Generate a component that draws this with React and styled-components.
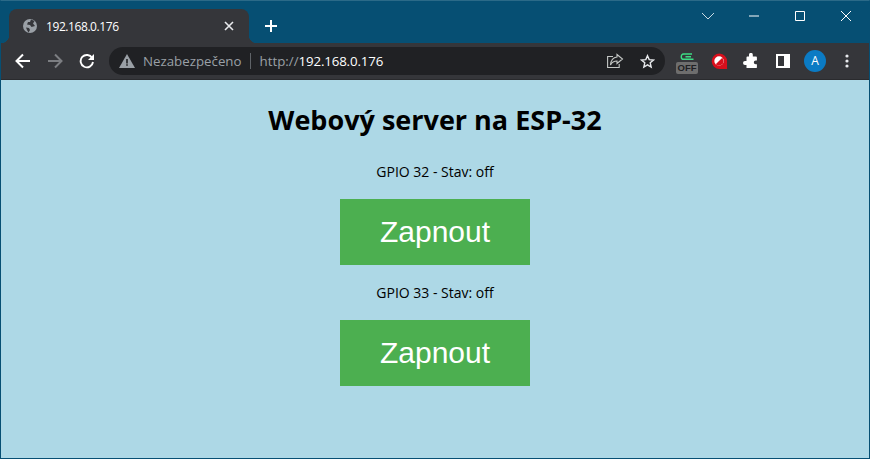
import styled, { createGlobalStyle } from "styled-components";

const GlobalStyle = createGlobalStyle`
  html, body {
    margin: 0;
    padding: 0;
    height: 100%;
    overflow: hidden;
    background: #064f73;
  }
`;

const Win = styled.div`
  display: flex;
  flex-direction: column;
  width: 870px;
  height: 459px;
  box-sizing: border-box;
  border: 1px solid #064f73;
  border-top: 1px solid #2b6a88;
`;

const TitleBar = styled.div`
  display: flex;
  align-items: flex-end;
  height: 42px;
  flex: none;
  background: #064f73;
  padding-left: 8px;
`;

const Tab = styled.div`
  position: relative;
  display: flex;
  align-items: center;
  width: 240px;
  height: 34px;
  box-sizing: border-box;
  padding: 0 13px 0 13px;
  background: #35363a;
  border-radius: 8px 8px 0 0;
  color: #fff;
  font: 12px "Open Sans", sans-serif;

  &::before,
  &::after {
    content: "";
    position: absolute;
    bottom: 0;
    width: 8px;
    height: 8px;
  }
  &::before {
    left: -8px;
    background: radial-gradient(circle at 0 0, transparent 8px, #35363a 8.5px);
  }
  &::after {
    right: -8px;
    background: radial-gradient(circle at 100% 0, transparent 8px, #35363a 8.5px);
  }
`;

const TabTitle = styled.span`
  flex: 1;
  margin-left: 8px;
  letter-spacing: -0.42px;
`;

const NewTab = styled.div`
  display: flex;
  align-items: center;
  justify-content: center;
  width: 28px;
  height: 28px;
  margin: 0 0 3px 8px;
`;

const Spacer = styled.div`
  flex: 1;
`;

const WinControls = styled.div`
  display: flex;
  align-self: flex-start;
  height: 30px;
`;

const WinButton = styled.div`
  display: flex;
  align-items: center;
  justify-content: center;
  width: 46px;
  height: 30px;
`;

const Toolbar = styled.div`
  display: flex;
  align-items: center;
  height: 36px;
  flex: none;
  background: #35363a;
  padding-left: 6px;
  border-bottom: 1px solid #2a2b2e;
  box-sizing: content-box;
`;

const NavButton = styled.div`
  display: flex;
  align-items: center;
  justify-content: center;
  width: 32px;
  height: 28px;
`;

const Omnibox = styled.div`
  display: flex;
  align-items: center;
  width: 556px;
  height: 28px;
  margin: 0 6px;
  box-sizing: border-box;
  padding: 0 2px 0 10px;
  border-radius: 14px;
  background: #202124;
  font: 13.3px "Open Sans", sans-serif;
`;

const SecurityLabel = styled.span`
  margin-left: 8px;
  color: #9aa0a6;
`;

const Divider = styled.span`
  width: 1px;
  height: 16px;
  margin: 0 9px 0 8px;
  background: #5f6368;
`;

const Url = styled.span`
  flex: 1;
  color: #9aa0a6;

  b {
    color: #fff;
    font-weight: 400;
    letter-spacing: -0.15px;
  }
`;

const OmniIcon = styled.div`
  display: flex;
  align-items: center;
  justify-content: center;
  width: 32px;
  height: 28px;
`;

const ExtButton = styled.div`
  display: flex;
  align-items: center;
  justify-content: center;
  width: 32px;
  height: 28px;
`;

const OffBadge = styled.div`
  display: flex;
  flex-direction: column;
  align-items: center;
  padding-top: 5px;
`;

const OffLabel = styled.span`
  width: 22px;
  height: 12px;
  margin-top: 1px;
  border-radius: 2px;
  background: #6e6e6e;
  color: #202124;
  font: 700 9.5px/12px "Liberation Sans", sans-serif;
  text-align: center;
`;

const Avatar = styled.div`
  width: 22px;
  height: 22px;
  border-radius: 50%;
  background: #0b7bc4;
  color: #fff;
  font: 12px/22px "Open Sans", sans-serif;
  text-align: center;
`;

const Page = styled.main`
  flex: 1;
  background: #add8e6;
  color: #000;
  font-family: "Open Sans", sans-serif;
  text-align: center;
  overflow: hidden;
`;

const Heading = styled.h1`
  margin: 20px 0 23px;
  font-size: 27px;
  line-height: 40px;
  font-weight: 700;
`;

const Status = styled.p`
  margin: 0;
  font-size: 14px;
  line-height: 18px;
`;

const Button = styled.button`
  display: block;
  width: 190px;
  height: 66px;
  margin: 18px auto 19px;
  padding: 0;
  border: none;
  background: #4caf50;
  color: #fff;
  font: 30px "Liberation Sans", sans-serif;
`;

const Globe = () => (
  <svg width="16" height="16" viewBox="0 0 16 16">
    <circle cx="8" cy="8" r="7" fill="#9aa0a6" />
    <path d="M9 1.500 12.500 3 11 5.500 13 8 9.500 9 8 7 5 6.500 6 4 8 4ZM4 9.500l3 .5 1 2-1.500 2.500L5 12Z" fill="#35363a" />
  </svg>
);

const Back = () => (
  <svg width="16" height="16" viewBox="0 0 16 16" fill="none" stroke="#fff" strokeWidth="2">
    <path d="M15 8H2M8 1.500 1.500 8 8 14.500" />
  </svg>
);

const Forward = () => (
  <svg width="16" height="16" viewBox="0 0 16 16" fill="none" stroke="#7c7e82" strokeWidth="2">
    <path d="M1 8h13M8 1.500 14.500 8 8 14.500" />
  </svg>
);

const Reload = () => (
  <svg width="16" height="16" viewBox="0 0 16 16" fill="none">
    <path d="M13.200 5A6.200 6.200 0 1 0 14 9" stroke="#fff" strokeWidth="1.900" />
    <path d="M15 1v6H9Z" fill="#fff" />
  </svg>
);

const Warning = () => (
  <svg width="16" height="14" viewBox="0 0 16 14">
    <path d="M8 0 16 14H0Z" fill="#9aa0a6" />
    <path d="M7.200 5h1.600v4.400H7.200ZM7.200 10.200h1.600v1.600H7.200Z" fill="#202124" />
  </svg>
);

const Share = () => (
  <svg width="18" height="16" viewBox="0 0 18 16" fill="none" stroke="#c4c7c5" strokeWidth="1.100">
    <path d="M7 3.500H1.600v11h11.600V11" />
    <path d="M11 1.500 16.500 6 11 10.500V8C8 8 6 9 4.500 12 4.800 8 7 4.500 11 4Z" />
  </svg>
);

const Star = () => (
  <svg width="15" height="15" viewBox="0 0 16 16" fill="none" stroke="#e8eaed" strokeWidth="1.500">
    <path d="M8 1.800 9.800 6l4.600.4-3.500 3 1 4.500L8 11.500 4.100 13.900l1-4.500-3.500-3L6.200 6Z" />
  </svg>
);

const Swirl = () => (
  <svg width="14" height="8" viewBox="0 0 14 8" fill="none" stroke="#3ddc84" strokeWidth="1.400">
    <path d="M11 3.700H5.500M12 1H3.500C.5 1 .5 6.300 3.500 6.300H13.500" />
  </svg>
);

const RedDot = () => (
  <svg width="17" height="17" viewBox="0 0 18 18">
    <path d="M9 .5A8.200 8.200 0 1 0 9 17h8V9A8.200 8.200 0 0 0 9 .5Z" fill="#d80f1c" />
    <circle cx="8.500" cy="8.500" r="5" fill="#fff" />
    <path d="M5 12 12 5 13.400 8.500A5 5 0 0 1 5 12Z" fill="#d80f1c" />
  </svg>
);

const Puzzle = () => (
  <svg width="16" height="16" viewBox="0 0 16 16">
    <path d="M6 1.800a1.900 1.900 0 0 1 3.800 0V3.500H13a.9.9 0 0 1 .9.9v3h-1.200a1.900 1.900 0 0 0 0 3.800h1.200v3a.9.9 0 0 1-.9.9H3.500V12H2a2 2 0 0 1 0-4h1.500V4.400a.9.9 0 0 1 .9-.9H6Z" fill="#fff" />
  </svg>
);

const SidePanel = () => (
  <svg width="14" height="14" viewBox="0 0 14 14">
    <path d="M0 0h14v14H0Z" fill="#fff" />
    <path d="M2 2h6v10H2Z" fill="#35363a" />
  </svg>
);

const Dots = () => (
  <svg width="4" height="14" viewBox="0 0 4 14" fill="#e8eaed">
    <circle cx="2" cy="2" r="1.600" />
    <circle cx="2" cy="7" r="1.600" />
    <circle cx="2" cy="12" r="1.600" />
  </svg>
);

const Glyph = ({ d, w = 1.200, color = "#fff", size = 14 }) => (
  <svg width={size} height={size} viewBox="0 0 14 14" fill="none" stroke={color} strokeWidth={w}>
    <path d={d} />
  </svg>
);

export default function App() {
  return (
    <>
      <GlobalStyle />
      <Win>
        <TitleBar>
          <Tab>
            <Globe />
            <TabTitle>192.168.0.176</TabTitle>
            <Glyph d="M3 3l8 8M11 3l-8 8" w={1.600} color="#e8eaed" />
          </Tab>
          <NewTab>
            <Glyph d="M7 1v12M1 7h12" w={2} />
          </NewTab>
          <Spacer />
          <WinControls>
            <WinButton>
              <Glyph d="M1 4l6 6 6-6" w={1} color="#c9dbe4" />
            </WinButton>
            <WinButton>
              <Glyph d="M2 7h10" w={1} />
            </WinButton>
            <WinButton>
              <Glyph d="M2.500 2.500h9v9h-9Z" w={1} />
            </WinButton>
            <WinButton>
              <Glyph d="M2 2l10 10M12 2 2 12" w={1} />
            </WinButton>
          </WinControls>
        </TitleBar>
        <Toolbar>
          <NavButton><Back /></NavButton>
          <NavButton><Forward /></NavButton>
          <NavButton><Reload /></NavButton>
          <Omnibox>
            <Warning />
            <SecurityLabel>Nezabezpečeno</SecurityLabel>
            <Divider />
            <Url>http://<b>192.168.0.176</b></Url>
            <OmniIcon><Share /></OmniIcon>
            <OmniIcon><Star /></OmniIcon>
          </Omnibox>
          <ExtButton>
            <OffBadge>
              <Swirl />
              <OffLabel>OFF</OffLabel>
            </OffBadge>
          </ExtButton>
          <ExtButton><RedDot /></ExtButton>
          <ExtButton><Puzzle /></ExtButton>
          <ExtButton><SidePanel /></ExtButton>
          <ExtButton><Avatar>A</Avatar></ExtButton>
          <ExtButton><Dots /></ExtButton>
        </Toolbar>
        <Page>
          <Heading>Webový server na ESP-32</Heading>
          <Status>GPIO 32 - Stav: off</Status>
          <Button>Zapnout</Button>
          <Status>GPIO 33 - Stav: off</Status>
          <Button>Zapnout</Button>
        </Page>
      </Win>
    </>
  );
}
